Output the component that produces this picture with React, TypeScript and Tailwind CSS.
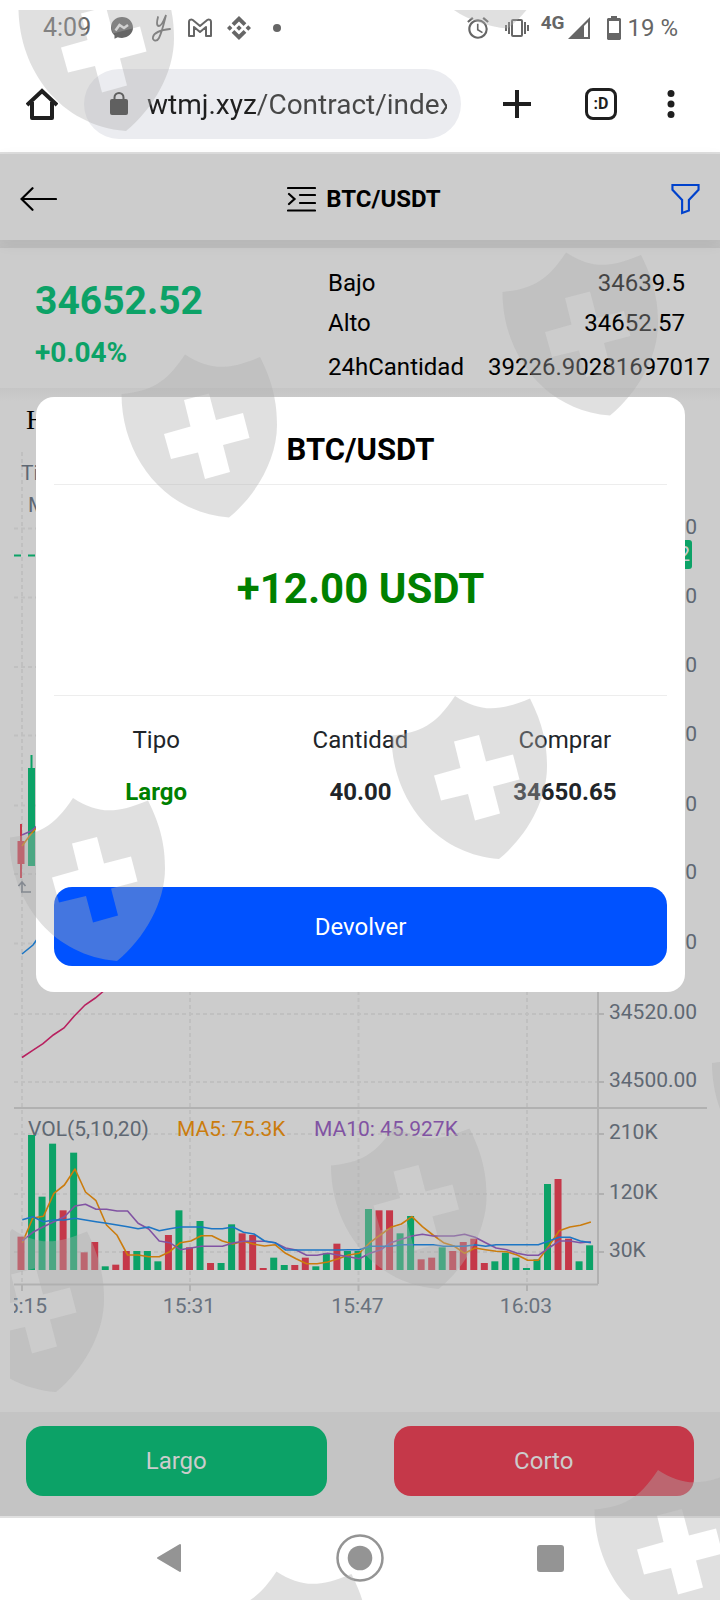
import { SiBinance } from "react-icons/si";
import { MdAlarm } from "react-icons/md";

type Candle = [up: 0 | 1, height: number];

// Volume bars, oldest first: direction and height in thirds of a unit.
const volumes: Candle[] = [
  [0, 100], [1, 405], [1, 220], [1, 379], [0, 179], [1, 352], [0, 53], [0, 84], [1, 11], [0, 16], [0, 57],
  [1, 57], [1, 57], [1, 26], [0, 105], [1, 179], [0, 68], [1, 147], [0, 21], [1, 21], [1, 137], [0, 110],
  [0, 105], [0, 6], [1, 37], [1, 15], [0, 15], [0, 37], [1, 11], [1, 50], [0, 79], [1, 57], [1, 57],
  [1, 183], [0, 179], [0, 179], [1, 110], [1, 162], [0, 32], [0, 37], [1, 68], [0, 57], [0, 84], [0, 94],
  [0, 21], [1, 26], [1, 52], [1, 37], [1, 6], [1, 32], [1, 258], [0, 273], [0, 94], [1, 26], [1, 74],
];

const ma5 = [
  818, 744, 739, 670, 645, 597, 666, 692, 765, 796, 855, 855, 860, 860, 845, 818, 813, 797, 797, 813, 822, 814,
  823, 828, 824, 850, 866, 881, 881, 876, 866, 855, 850, 818, 795, 772, 762, 740, 770, 795, 818, 828, 850, 834,
  839, 844, 845, 855, 871, 871, 828, 782, 771, 766, 756,
];
const ma10 = [
  813, 787, 770, 755, 740, 708, 703, 718, 718, 723, 723, 760, 777, 813, 818, 839, 834, 829, 829, 829, 819, 814,
  814, 814, 818, 834, 840, 856, 856, 850, 855, 860, 866, 850, 840, 818, 808, 798, 793, 798, 798, 798, 793, 802,
  818, 834, 839, 850, 856, 856, 834, 813, 813, 818, 815,
];
const ma20 = [
  749, 740, 755, 750, 750, 745, 750, 755, 760, 765, 770, 776, 771, 782, 776, 771, 771, 771, 776, 776, 771, 787,
  792, 813, 818, 840, 840, 840, 840, 840, 840, 839, 839, 829, 829, 829, 824, 824, 824, 824, 829, 829, 829, 824,
  829, 824, 824, 824, 824, 824, 813, 802, 802, 813, 818,
];

const STEP = 10.53;
const toPoints = (values: number[]) =>
  values.map((v, i) => `${(22.3 + i * STEP).toFixed(1)},${(970 + v / 3).toFixed(1)}`).join(" ");

const priceTicks = [
  { y: 528.5, label: "34660.00" },
  { y: 597.5, label: "34640.00" },
  { y: 667, label: "34620.00" },
  { y: 735.5, label: "34600.00" },
  { y: 805.5, label: "34580.00" },
  { y: 874, label: "34560.00" },
  { y: 943.5, label: "34540.00" },
  { y: 1014, label: "34520.00" },
  { y: 1082, label: "34500.00" },
];
const volumeTicks = [
  { y: 1134, label: "210K" },
  { y: 1194, label: "120K" },
  { y: 1252, label: "30K" },
];
const timeTicks = [
  { x: 22, label: "15:15" },
  { x: 190, label: "15:31" },
  { x: 358.5, label: "15:47" },
  { x: 527, label: "16:03" },
];

function Chart() {
  return (
    <svg viewBox="0 452 720 888" className="block h-auto w-full" fontFamily="Roboto, sans-serif" fontSize="21">
      <defs>
        <clipPath id="plot">
          <rect x="14" y="452" width="706" height="888" />
        </clipPath>
      </defs>
      <g stroke="#c0c0c0" strokeWidth="2" strokeDasharray="4 3">
        {[...priceTicks, ...volumeTicks].map((t) => (
          <line key={t.label} x1="14" x2="598" y1={t.y} y2={t.y} />
        ))}
        {timeTicks.map((t) => (
          <line key={t.label} x1={t.x} x2={t.x} y1="452" y2="1284" />
        ))}
      </g>
      <g stroke="#b1b1b1" strokeWidth="2">
        <line x1="14" x2="707" y1="1108" y2="1108" />
        <line x1="14" x2="598" y1="1284.500" y2="1284.500" />
        <line x1="598" x2="598" y1="452" y2="1284" />
        {[...priceTicks, ...volumeTicks].map((t) => (
          <line key={t.label} x1="598" x2="604" y1={t.y} y2={t.y} />
        ))}
        {timeTicks.map((t) => (
          <line key={t.label} x1={t.x} x2={t.x} y1="1284" y2="1291" />
        ))}
      </g>
      <g fill="#5f6873">
        {[...priceTicks, ...volumeTicks].map((t) => (
          <text key={t.label} x="609" y={t.y + 5}>{t.label}</text>
        ))}
        <text x="21" y="480">Ti</text>
        <text x="28" y="512">M</text>
        <text x="28" y="1136">VOL(5,10,20)</text>
      </g>
      <text x="177" y="1136" fill="#cb7c0d">MA5: 75.3K</text>
      <text x="314" y="1136" fill="#8153a3">MA10: 45.927K</text>
      <g fill="#69727e" textAnchor="middle" clipPath="url(#plot)">
        {timeTicks.map((t) => (
          <text key={t.label} x={t.x - 1} y="1313">{t.label}</text>
        ))}
      </g>

      <line x1="14" x2="598" y1="555.500" y2="555.500" stroke="#0ca267" strokeWidth="2" strokeDasharray="7 7" />
      <rect x="598" y="540" width="94" height="29" rx="3" fill="#0ca267" />
      <text x="602" y="561" fill="#ccc">34652.52</text>

      <g fill="#c53849">
        <rect x="20" y="824" width="2" height="54" />
        <rect x="17.500" y="841" width="7" height="23" />
      </g>
      <g fill="#0ca267">
        <rect x="30.500" y="755" width="2" height="14" />
        <rect x="28" y="768" width="7" height="98" />
      </g>
      <g fill="none" strokeWidth="1.600">
        <polyline points="22,846 31,834 38,826" stroke="#cb7c0d" />
        <polyline points="22,835 31,831 38,825" stroke="#8153a3" />
        <polyline points="22,954 33,945 38,938" stroke="#1d76c4" />
        <polyline
          points="22,1057.5 32.7,1050.3 43,1043.7 53.3,1035 64,1028 74.3,1016 85,1005 95.300,998 106,989"
          stroke="#b8205f"
        />
        <path d="M22 892V883M18.500 886l3.500-4 3.500 4M21 892h10" stroke="#69727e" />
      </g>

      {volumes.map(([up, h], i) => (
        <rect
          key={i}
          x={17.5 + i * STEP}
          y={1270 - h / 3}
          width="7"
          height={h / 3}
          fill={up ? "#0ca267" : "#c53849"}
        />
      ))}
      <g fill="none" strokeWidth="1.600" strokeLinejoin="round">
        <polyline points={toPoints(ma5)} stroke="#cb7c0d" />
        <polyline points={toPoints(ma10)} stroke="#8153a3" />
        <polyline points={toPoints(ma20)} stroke="#1d76c4" />
      </g>
    </svg>
  );
}

function StatusBar() {
  return (
    <div className="flex h-[56px] items-center pr-[42px] pl-[43px] text-[25px] text-[#666]">
      <span className="w-[67px]">4:09</span>
      <svg width="24" height="24" viewBox="0 0 24 24" className="mr-[17px]">
        <path d="M12 1C5.700 1 1 5.500 1 11.600c0 3.200 1.300 6 3.500 7.900v3.300l3.200-1.500c1.300.4 2.800.6 4.300.6 6.300 0 11-4.400 11-10.300S18.300 1 12 1z" fill="#666" />
        <path d="M5.500 14.500l4-5.500 4.500 3 4-3" fill="none" stroke="#e8e8e8" strokeWidth="2.500" />
      </svg>
      <svg width="20" height="28" viewBox="0 0 20 28" className="mr-[16px]" fill="none" stroke="#666" strokeWidth="1.800" strokeLinecap="round">
        <path d="M7 3c-1 4-2 9 1 9 3 0 5-6 7-11-2 8-4 17-7 23-2 4-7 3-6-1 1-4 8-7 17-8" />
      </svg>
      <svg width="26" height="20" viewBox="0 0 26 20" className="mr-[14px]" fill="none" stroke="#666" strokeWidth="2" strokeLinejoin="round">
        <path d="M2 18V4c0-3 3-3 5-1l6 5 6-5c2-2 5-2 5 1v14h-5V9l-6 5-6-5v9z" />
      </svg>
      <SiBinance className="mr-[22px] size-[24px]" />
      <span className="size-2 rounded-full bg-[#666]" />
      <span className="flex-1" />
      <MdAlarm className="mr-[13px] size-[26px]" />
      <svg width="26" height="20" viewBox="0 0 26 20" className="mr-[11px]" stroke="#666" fill="none" strokeWidth="2">
        <rect x="8" y="2" width="10" height="16" rx="1" />
        <path d="M5 4v12M21 4v12M2 7v6M24 7v6" />
      </svg>
      <span className="mr-1 mb-3 text-[19px] leading-none font-bold">4G</span>
      <svg width="22" height="22" viewBox="0 0 22 22" className="mr-[17px]">
        <path d="M0 22L22 0v22z" fill="#666" />
        <path d="M16 9l4-4v15h-4z" fill="#fff" />
      </svg>
      <svg width="14" height="24" viewBox="0 0 14 24" className="mr-[6px]">
        <path d="M4 0h6v2h3l1 1v20l-1 1H1l-1-1V3l1-1h3z" fill="#666" />
        <path d="M2 5h10v12H2z" fill="#fff" />
      </svg>
      <span className="text-[24px]">19 %</span>
    </div>
  );
}

function BrowserBar() {
  return (
    <div className="flex h-[96px] items-center pr-[45px] pl-[26px] text-[#1f1f1f]">
      <button aria-label="Inicio">
        <svg width="32" height="32" viewBox="0 0 32 32" fill="none" stroke="currentColor" strokeWidth="4" strokeLinejoin="round">
          <path d="M1 17L16 3l15 14" strokeLinejoin="miter" />
          <path d="M6 14v16h20V14" />
        </svg>
      </button>
      <div className="ml-[26px] flex h-[70px] min-w-0 flex-1 items-center rounded-full bg-[#ebecf0] pr-[14px] pl-[26px]">
        <svg width="18" height="24" viewBox="0 0 18 24" className="mr-[19px] shrink-0">
          <rect x="0" y="7" width="18" height="16" rx="2" fill="#2e2e2e" />
          <path d="M4.500 8V5.500a4.500 4.500 0 0 1 9 0V8" fill="none" stroke="#2e2e2e" strokeWidth="2" />
        </svg>
        <input
          aria-label="Dirección"
          defaultValue="wtmj.xyz/Contract/index"
          className="w-full min-w-0 bg-[linear-gradient(90deg,#1f1f1f_110px,#474747_110px)] bg-clip-text pt-[2px] text-[28px] text-transparent outline-none"
        />
      </div>
      <button aria-label="Nueva pestaña" className="ml-[42px]">
        <svg width="28" height="28" viewBox="0 0 28 28" stroke="currentColor" strokeWidth="4">
          <path d="M14 0v28M0 14h28" />
        </svg>
      </button>
      <button
        aria-label="Pestañas"
        className="ml-[54px] flex size-8 items-center justify-center rounded-lg border-[3px] border-[#1f1f1f] text-[16px] leading-none font-bold"
      >
        :D
      </button>
      <button aria-label="Más opciones" className="ml-[50px]">
        <svg width="8" height="28" viewBox="0 0 8 28" fill="currentColor">
          <circle cx="4" cy="3.500" r="3.500" />
          <circle cx="4" cy="14" r="3.500" />
          <circle cx="4" cy="24.500" r="3.500" />
        </svg>
      </button>
    </div>
  );
}

function Header() {
  return (
    <header className="relative flex h-[86px] items-center justify-between bg-[#ccc] px-5 pt-[3px] shadow-[0_4px_14px_rgba(0,0,0,0.06)]">
      <button aria-label="Atrás">
        <svg width="37" height="24" viewBox="0 0 37 24" fill="none" stroke="#000" strokeWidth="2.200" strokeLinecap="round">
          <path d="M12.500 1.200L1.500 12l11 10.800M1.500 12H36" />
        </svg>
      </button>
      <button className="flex items-center gap-[10px] text-[24px] leading-8 font-bold text-black">
        <svg width="29" height="26" viewBox="0 0 29 26" fill="none" stroke="#000" strokeWidth="2.200" strokeLinecap="round">
          <path d="M1 2h27M13 9h15M13 17h15M1 24.500h27M2 8l5.500 5L2 18" />
        </svg>
        BTC/USDT
      </button>
      <button aria-label="Filtrar">
        <svg width="29" height="32" viewBox="0 0 30 32" fill="none" stroke="#0042cc" strokeWidth="2.200">
          <path d="M1.500 1.500h27V6.500L18.500 17v11L11.500 30.500V17L1.500 6.500z" />
        </svg>
      </button>
    </header>
  );
}

const stats = [
  { label: "Bajo", value: "34639.5" },
  { label: "Alto", value: "34652.57" },
  { label: "24hCantidad", value: "39226.90281697017" },
];

function Stats() {
  return (
    <section className="mt-2 flex h-[140px] justify-between bg-[#ccc] pr-[35px] pl-[35px] shadow-[0_4px_14px_rgba(0,0,0,0.06)]">
      <div className="flex flex-col gap-2 pt-[29px] font-bold text-[#0ca267]">
        <span className="text-[39px] leading-[48px]">34652.52</span>
        <span className="text-[28px] leading-10">+0.04%</span>
      </div>
      <dl className="w-[357px] pt-[15px] text-[24px] leading-10 whitespace-nowrap text-black">
        {stats.map((s) => (
          <div key={s.label} className="flex justify-between gap-6 last:mt-1">
            <dt>{s.label}</dt>
            <dd>{s.value}</dd>
          </div>
        ))}
      </dl>
    </section>
  );
}

const details = [
  { label: "Tipo", value: "Largo", tone: "text-[#008000]" },
  { label: "Cantidad", value: "40.00", tone: "text-[#212529]" },
  { label: "Comprar", value: "34650.65", tone: "text-[#212529]" },
];

function ResultDialog() {
  return (
    <div className="absolute inset-0 pt-[243px] pr-[35px] pl-9">
      <div role="dialog" aria-labelledby="result-title" className="rounded-[18px] bg-white px-[18px] pb-[26px]">
        <h2 id="result-title" className="border-b border-[#ededed] pt-[29px] pb-[10px] text-center text-[31px] leading-[48px] font-bold text-black">
          BTC/USDT
        </h2>
        <p className="flex h-[211px] items-center justify-center border-b border-[#ededed] pb-[2px] text-[42px] leading-none font-bold text-[#008000]">
          +12.00 USDT
        </p>
        <dl className="grid grid-cols-3 pt-6 pb-[69px] text-center text-[24px] text-[#212529]">
          {details.map((d) => (
            <div key={d.label} className="leading-[52px]">
              <dt className="leading-10">{d.label}</dt>
              <dd className={`pt-[6px] font-bold ${d.tone}`}>{d.value}</dd>
            </div>
          ))}
        </dl>
        <button className="h-[79px] w-full rounded-[18px] bg-[#0052ff] text-[24px] text-white">Devolver</button>
      </div>
    </div>
  );
}

const shields = [
  [18.5, 7.5], [400.5, -95], [502.5, 292], [121.5, 394], [391.5, 735.5], [9.5, 837.5],
  [712, 1063], [331, 1165.5], [-51.5, 1268.5], [594.5, 1509.5], [213, 1611],
];

function Watermark() {
  return (
    <div className="pointer-events-none absolute inset-0 overflow-hidden" aria-hidden="true">
      <svg viewBox="0 0 720 1600" className="block h-auto w-full">
        <defs>
          <clipPath id="mark-area">
            <rect x="10" y="10" width="710" height="1590" />
          </clipPath>
        </defs>
        <g clipPath="url(#mark-area)" fill="#b0b0b0" fillOpacity="0.39" fillRule="evenodd">
          {shields.map(([x, y]) => (
            <path
              key={`${x}-${y}`}
              transform={`translate(${x} ${y})`}
              d="M0 0C29-3 44-10 63.500-39.500C88-24 105-23 138.500-37C152-10 155.500 10 155.500 31C155.500 65 135 101 107.500 123.500C40 118 0 60 0 0zM62.500 6L87.500-.5L94.500 26L121.500 19L128 44L101.500 51L108.500 78L83.500 85L76.500 58.500L49.500 65L42.500 40L69 32.500z"
            />
          ))}
        </g>
      </svg>
    </div>
  );
}

function NavBar() {
  return (
    <nav className="grid h-[84px] grid-cols-3 items-center border-t-2 border-[#e0e0e0] bg-white px-[74px] pb-[2px]">
      <button aria-label="Atrás" className="flex justify-center">
        <svg width="26" height="30" viewBox="0 0 26 30">
          <path d="M2 15L24 2v26z" fill="#949494" stroke="#949494" strokeWidth="2" strokeLinejoin="round" />
        </svg>
      </button>
      <button aria-label="Inicio" className="flex justify-center">
        <svg width="48" height="48" viewBox="0 0 48 48">
          <circle cx="24" cy="24" r="22.500" fill="none" stroke="#949494" strokeWidth="2.500" />
          <circle cx="24" cy="24" r="12.300" fill="#949494" />
        </svg>
      </button>
      <button aria-label="Recientes" className="flex justify-center">
        <span className="size-[27px] rounded-[3px] bg-[#949494]" />
      </button>
    </nav>
  );
}

export default function App() {
  return (
    <div className="relative flex min-h-screen flex-col overflow-hidden bg-white font-[Roboto,sans-serif]">
      <StatusBar />
      <BrowserBar />
      <main className="relative flex flex-1 flex-col border-t-2 border-[#dedede] bg-[#c0c0c0]">
        <Header />
        <Stats />
        <div className="flex-1 bg-[#ccc]">
          <div className="flex h-16 items-center bg-linear-to-b from-[#c5c5c5] to-[#ccc] to-20% pl-[26px] font-['Liberation_Serif',serif] text-[28px] text-black">
            H
          </div>
          <Chart />
        </div>
        <div className="grid grid-cols-2 gap-[67px] bg-[#c4c4c4] px-[26px] pt-[14px] pb-5 text-[24px] text-[#ccc]">
          <button className="h-[70px] rounded-[17px] bg-[#0ca267]">Largo</button>
          <button className="h-[70px] rounded-[17px] bg-[#c53849]">Corto</button>
        </div>
        <ResultDialog />
      </main>
      <NavBar />
      <Watermark />
    </div>
  );
}
